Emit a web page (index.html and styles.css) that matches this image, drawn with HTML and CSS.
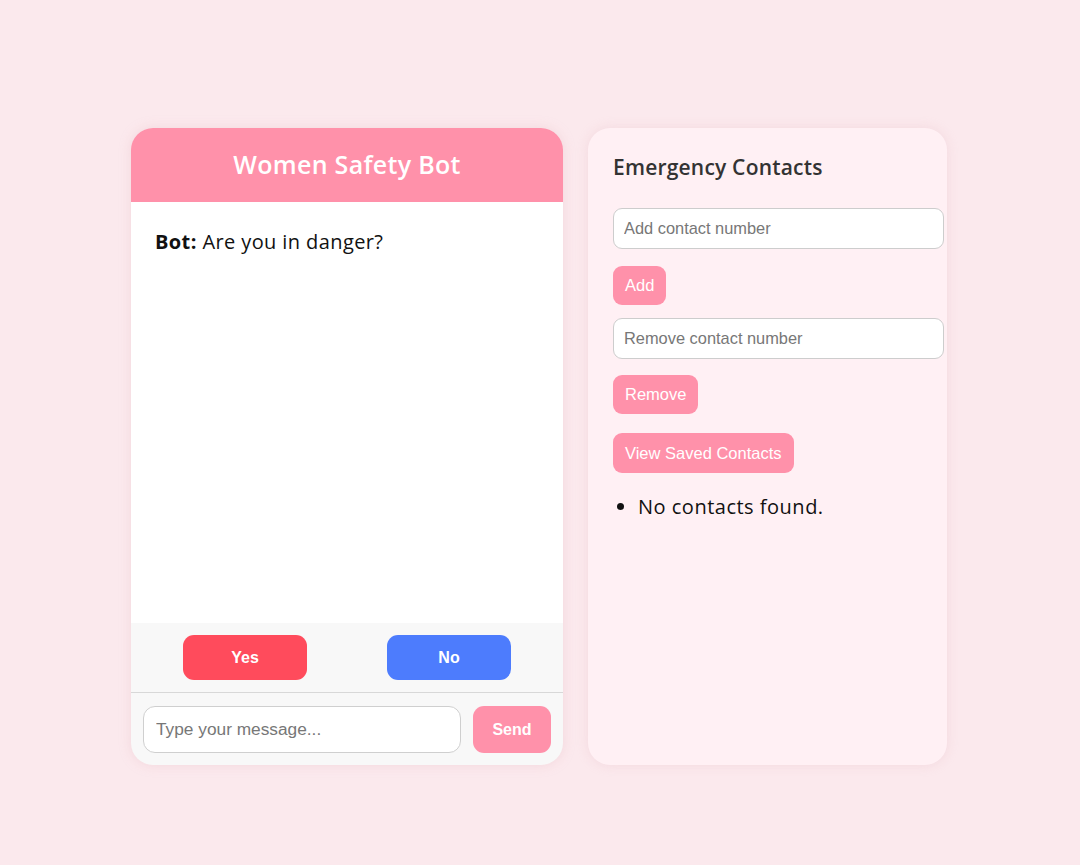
FILE: index.html
```html
<!DOCTYPE html>
<html>
<head>
<meta charset="utf-8">
<link rel="stylesheet" href="styles.css">
</head>
<body>
<div class="page">
  <div class="chat">
    <div class="chat-header">Women Safety Bot</div>
    <div class="messages">
      <p class="msg"><b>Bot:</b> Are you in danger?</p>
    </div>
    <div class="choices">
      <button class="choice yes">Yes</button>
      <button class="choice no">No</button>
    </div>
    <div class="composer">
      <input class="msg-input" type="text" placeholder="Type your message...">
      <button class="send">Send</button>
    </div>
  </div>
  <div class="contacts">
    <h3 class="contacts-title">Emergency Contacts</h3>
    <input class="field" type="text" placeholder="Add contact number">
    <button class="pbtn add">Add</button>
    <input class="field field2" type="text" placeholder="Remove contact number">
    <button class="pbtn remove">Remove</button>
    <button class="pbtn view">View Saved Contacts</button>
    <ul class="list"><li>No contacts found.</li></ul>
  </div>
</div>
</body>
</html>
```
FILE: styles.css
```css
* { box-sizing: border-box; }
html, body { margin: 0; padding: 0; }
body {
  background: #fbe9ed;
  font-family: "Open Sans", "Noto Sans", sans-serif;
  width: 1080px;
  height: 865px;
  overflow: hidden;
}
.page {
  display: flex;
  justify-content: center;
  align-items: flex-start;
  gap: 25px;
  padding-top: 128px;
  padding-right: 2px;
}
.chat {
  width: 432px;
  height: 637px;
  background: #f8f8f8;
  border-radius: 22px;
  box-shadow: 0 0 12px rgba(230, 180, 190, 0.35);
  display: flex;
  flex-direction: column;
  overflow: hidden;
}
.chat-header {
  height: 74px;
  background: #ff91aa;
  color: #fff;
  font-weight: 600;
  font-size: 25px;
  letter-spacing: 0.3px;
  display: flex;
  align-items: center;
  justify-content: center;
  padding-bottom: 2px;
}
.messages {
  height: 421px;
  background: #fff;
  padding: 26px 24px;
}
.msg {
  margin: 0;
  font-size: 20px;
  letter-spacing: 0.4px;
  color: #111;
}
.msg b { font-weight: 700; }
.choices {
  height: 70px;
  display: flex;
  justify-content: center;
  align-items: flex-start;
  gap: 80px;
  padding-top: 12px;
  border-bottom: 1px solid #d8d8d8;
}
.choice {
  width: 124px;
  height: 45px;
  border: none;
  border-radius: 11px;
  color: #fff;
  font-family: "Liberation Sans", Arial, sans-serif;
  font-weight: 700;
  font-size: 16px;
}
.yes { background: #ff4b5c; }
.no { background: #4d7cfd; }
.composer {
  flex: 1;
  display: flex;
  gap: 12px;
  padding: 13px 12px 0 12px;
}
.msg-input {
  width: 318px;
  height: 47px;
  border: 1px solid #cfcfcf;
  border-radius: 12px;
  padding: 0 12px;
  font-family: "Liberation Sans", Arial, sans-serif;
  font-size: 17.3px;
  background: #fff;
}
.msg-input::placeholder { color: #777; }
.send {
  width: 78px;
  height: 47px;
  border: none;
  border-radius: 11px;
  background: #ff91aa;
  color: #fff;
  font-family: "Liberation Sans", Arial, sans-serif;
  font-weight: 700;
  font-size: 16px;
}
.contacts {
  width: 359px;
  height: 637px;
  background: #fff0f4;
  border-radius: 22px;
  box-shadow: 0 0 12px rgba(230, 180, 190, 0.3);
  padding: 25px;
  display: flex;
  flex-direction: column;
  align-items: flex-start;
}
.contacts-title {
  margin: 0;
  font-size: 21px;
  letter-spacing: 0.2px;
  font-weight: 600;
  color: #333;
  height: 28px;
  line-height: 28px;
}
.field {
  width: 331px;
  flex: none;
  height: 41px;
  border: 1px solid #cdcdcd;
  border-radius: 9px;
  padding: 0 10px;
  font-family: "Liberation Sans", Arial, sans-serif;
  font-size: 16.4px;
  background: #fff;
  margin-top: 27px;
}
.field2 { margin-top: 13px; }
.field::placeholder { color: #777; }
.pbtn {
  height: 39px;
  border: none;
  border-radius: 9px;
  background: #ff91aa;
  color: #fff;
  font-family: "Liberation Sans", Arial, sans-serif;
  font-size: 16.5px;
  padding: 0 12px;
}
.add { margin-top: 17px; }
.remove { margin-top: 16px; }
.view { margin-top: 19px; height: 40px; }
.list {
  margin: 20px 0 0 0;
  padding-left: 25px;
  font-size: 20px;
  letter-spacing: 0.5px;
  color: #111;
}
```
